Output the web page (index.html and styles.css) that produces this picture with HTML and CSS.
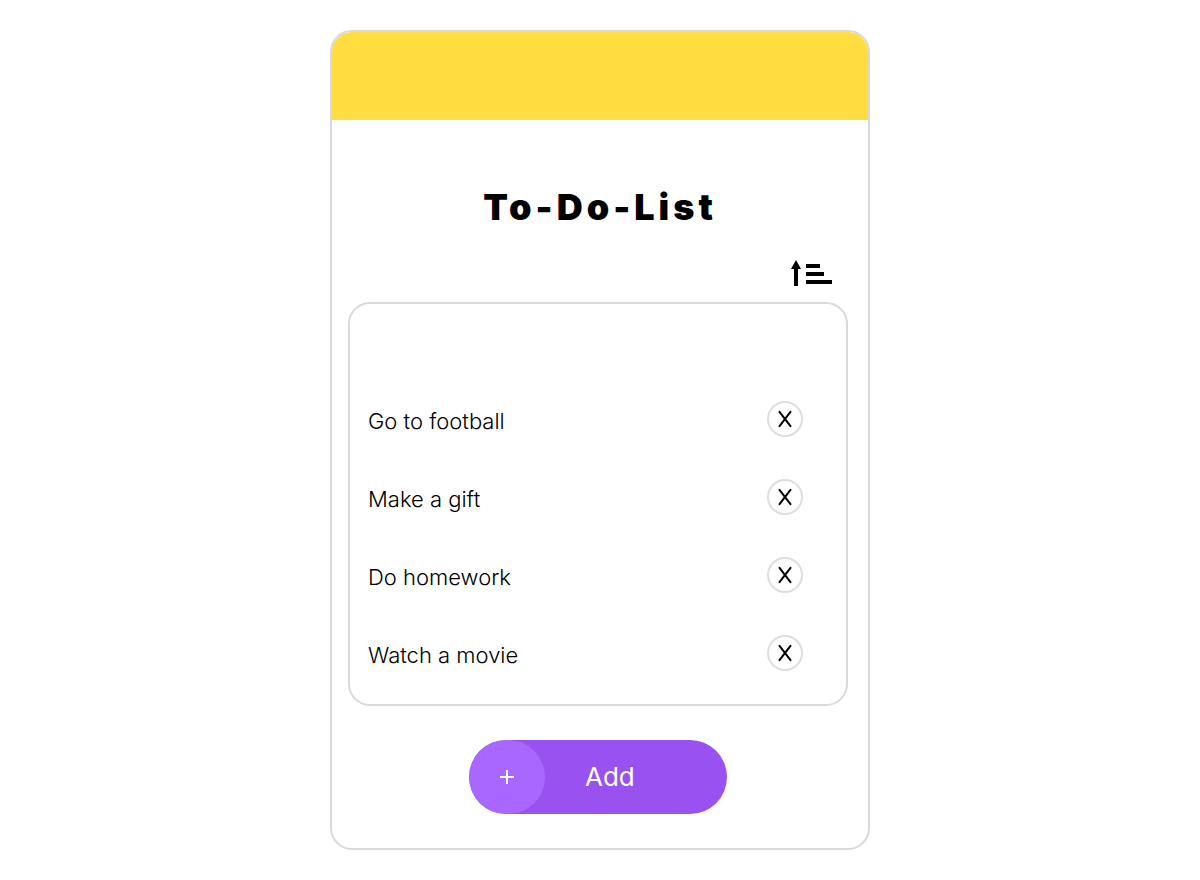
FILE: index.html
```
<!DOCTYPE html>
<html lang="en">
<head>
  <meta charset="UTF-8">
  <meta name="viewport" content="width=device-width, initial-scale=1.0">
  <title>To-Do-List</title>
  <link rel="stylesheet" href="styles.css">
</head>
<body>
  <main class="card">
    <div class="card-header"></div>
    <div class="card-body">
      <h1>To-Do-List</h1>
      <div class="toolbar">
        <button type="button" class="sort" aria-label="Sort">
          <svg viewBox="0 0 42 26"><path d="M6 0L11 9H8V26H4V9H1ZM16 4H30V8H16ZM16 12H34V16H16ZM16 20H42V24H16Z"/></svg>
        </button>
      </div>
      <ul class="list">
        <li class="task">
          <span>Go to football</span>
          <button type="button" class="delete" aria-label="Delete Go to football">
            <svg viewBox="0 0 36 36"><path d="M12.5 10.8L23.5 25.2M23.5 10.8L12.5 25.2"/></svg>
          </button>
        </li>
        <li class="task">
          <span>Make a gift</span>
          <button type="button" class="delete" aria-label="Delete Make a gift">
            <svg viewBox="0 0 36 36"><path d="M12.5 10.8L23.5 25.2M23.5 10.8L12.5 25.2"/></svg>
          </button>
        </li>
        <li class="task">
          <span>Do homework</span>
          <button type="button" class="delete" aria-label="Delete Do homework">
            <svg viewBox="0 0 36 36"><path d="M12.5 10.8L23.5 25.2M23.5 10.8L12.5 25.2"/></svg>
          </button>
        </li>
        <li class="task">
          <span>Watch a movie</span>
          <button type="button" class="delete" aria-label="Delete Watch a movie">
            <svg viewBox="0 0 36 36"><path d="M12.5 10.8L23.5 25.2M23.5 10.8L12.5 25.2"/></svg>
          </button>
        </li>
      </ul>
      <button type="button" class="add">
        <span class="add-icon">
          <svg viewBox="0 0 14 14"><path d="M7 0V14M0 7H14"/></svg>
        </span>
        <span class="add-text">Add</span>
      </button>
    </div>
  </main>
</body>
</html>
```
FILE: styles.css
```
* {
  box-sizing: border-box;
}
body {
  margin: 0;
  padding: 30px 16px;
  background: #fff;
  color: #000;
  font-family: Inter, "Open Sans", sans-serif;
}
button {
  padding: 0;
  border: none;
  background: none;
  color: inherit;
  font-family: inherit;
  cursor: pointer;
}
svg {
  display: block;
}
.card {
  max-width: 540px;
  margin: 0 auto;
  border: 2px solid #d9d9d9;
  border-radius: 22px;
  overflow: hidden;
}
.card-header {
  height: 88px;
  background: #ffdc40;
}
.card-body {
  display: flex;
  flex-direction: column;
  padding: 65px 20px 34px 16px;
}
h1 {
  margin: 0;
  padding-left: 4px;
  font-size: 36px;
  line-height: 44px;
  font-weight: 900;
  letter-spacing: 4px;
  text-align: center;
}
.toolbar {
  display: flex;
  justify-content: flex-end;
  padding: 31px 16px 16px;
}
.sort svg {
  width: 42px;
  height: 26px;
}
.list {
  margin: 0;
  padding: 76px 43px 12px 18px;
  list-style: none;
  border: 2px solid #d9d9d9;
  border-radius: 22px;
}
.task {
  display: flex;
  align-items: center;
  justify-content: space-between;
  height: 78px;
  font-size: 22px;
  line-height: 28px;
  font-weight: 300;
}
.task span {
  padding-top: 4px;
}
.delete {
  width: 36px;
  height: 36px;
  border-radius: 50%;
  box-shadow: inset 0 0 0 2px #dedede;
}
.delete path {
  stroke: #000;
  stroke-width: 2;
  stroke-linecap: round;
}
.add {
  display: flex;
  align-items: center;
  align-self: center;
  width: 258px;
  height: 74px;
  margin-top: 34px;
  border-radius: 37px;
  background: #9952f0;
  color: #fff;
  overflow: hidden;
}
.add-icon {
  display: flex;
  align-items: center;
  justify-content: center;
  width: 76px;
  height: 74px;
  border-radius: 37px;
  background: #a967ff;
}
.add-icon svg {
  width: 14px;
  height: 14px;
}
.add-icon path {
  stroke: #fff;
  stroke-width: 2;
}
.add-text {
  padding-left: 40px;
  font-size: 26px;
  line-height: 32px;
}
```
